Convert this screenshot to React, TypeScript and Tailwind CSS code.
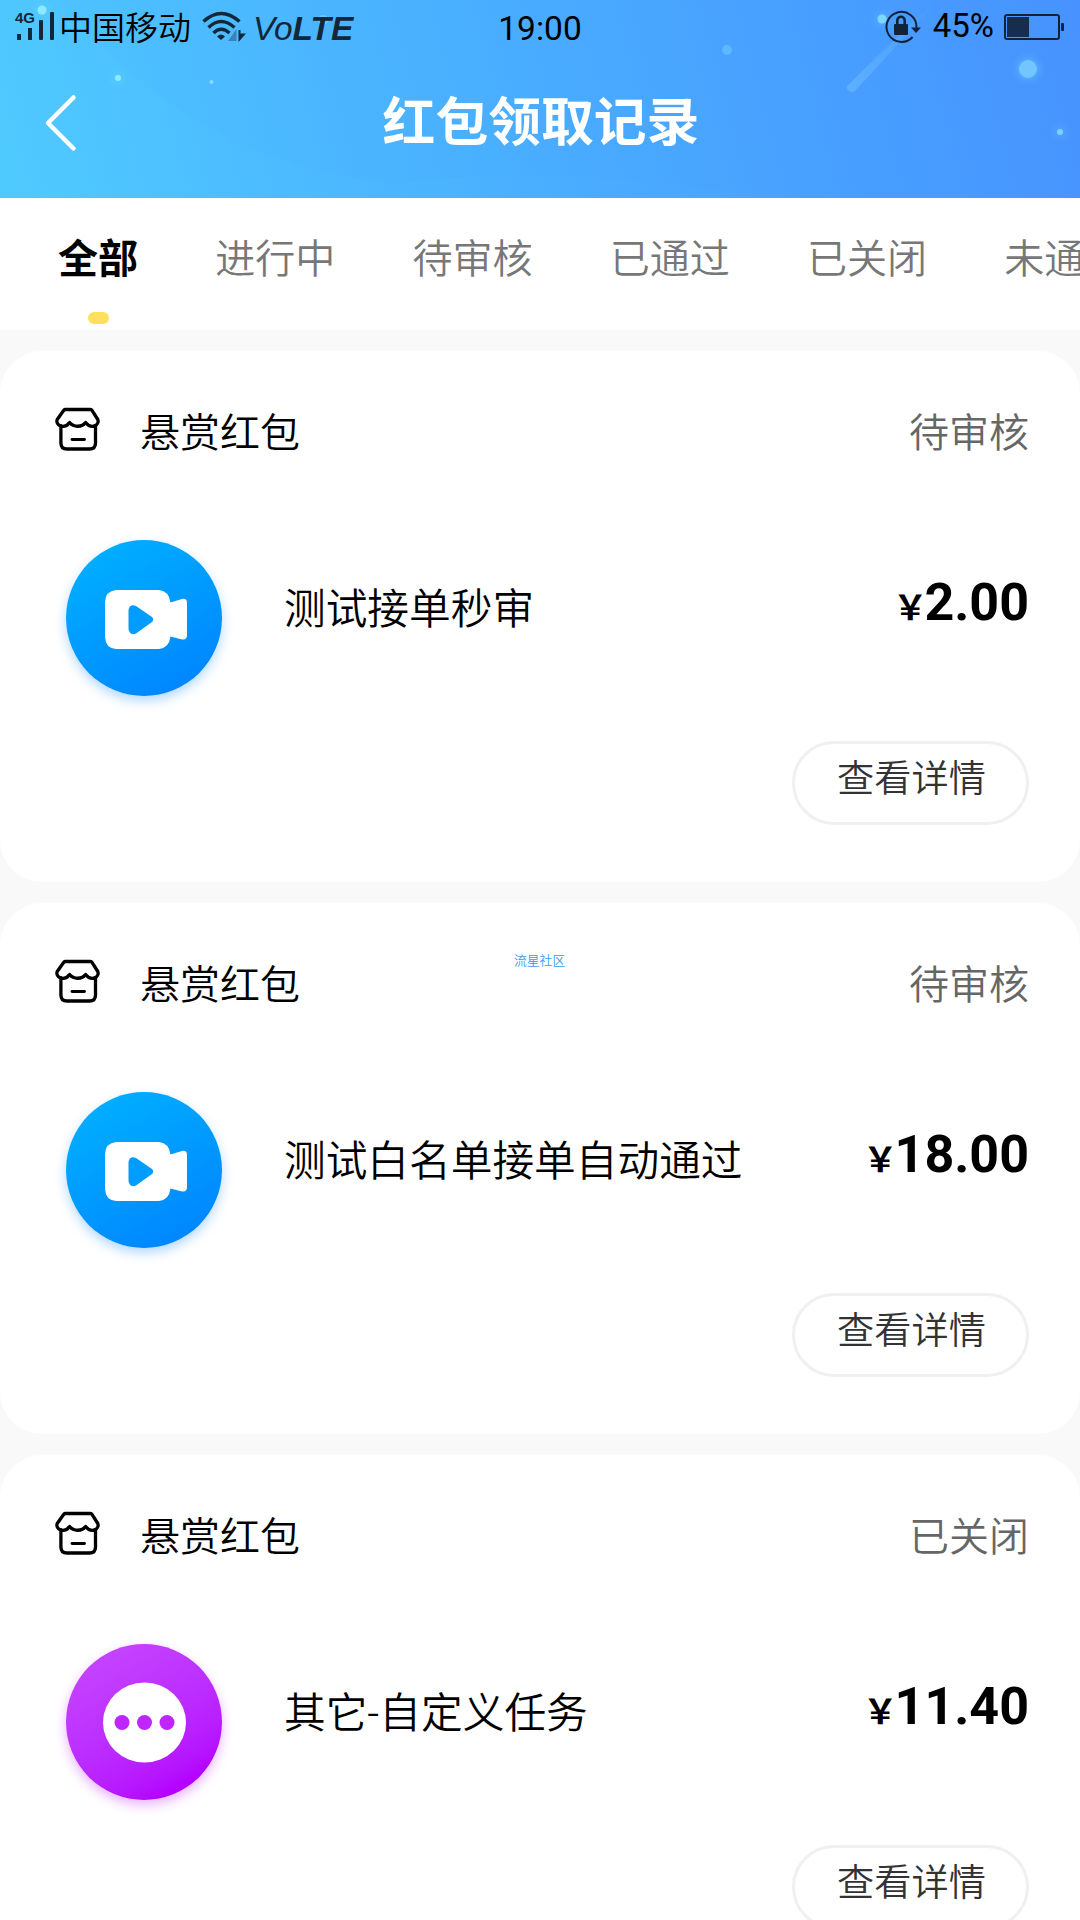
import { useState } from "react";

type TaskKind = "video" | "other";

const tabs = ["全部", "进行中", "待审核", "已通过", "已关闭", "未通过"];

const records: { id: number; kind: TaskKind; title: string; status: string; amount: string }[] = [
  { id: 1, kind: "video", title: "测试接单秒审", status: "待审核", amount: "2.00" },
  { id: 2, kind: "video", title: "测试白名单接单自动通过", status: "待审核", amount: "18.00" },
  { id: 3, kind: "other", title: "其它-自定义任务", status: "已关闭", amount: "11.40" },
];

function HeaderBackdrop() {
  return (
    <svg className="absolute inset-0 h-full w-full" viewBox="0 0 1080 198" fill="none">
      <defs>
        <linearGradient id="trail" x1="851" y1="88" x2="935" y2="2" gradientUnits="userSpaceOnUse">
          <stop stopColor="#7cc8ff" stopOpacity="0.4" />
          <stop offset="1" stopColor="#7cc8ff" stopOpacity="0" />
        </linearGradient>
        <filter id="glow" x="-100%" y="-100%" width="300%" height="300%">
          <feGaussianBlur stdDeviation="4" />
        </filter>
      </defs>
      <path d="M60 0C130 80 220 165 400 184C560 160 700 190 800 198H1080V0Z" fill="#3f9dff" fillOpacity="0.05" />
      <path d="M847 86L934 1L936 3L855 91A5 5 0 0 1 847 86Z" fill="url(#trail)" />
      <g fill="#7fe0ff" fillOpacity="0.45" filter="url(#glow)">
        <circle cx="42" cy="10" r="5" />
        <circle cx="118" cy="78" r="4" />
        <circle cx="882" cy="19" r="5" />
        <circle cx="1028" cy="69" r="10" />
        <circle cx="1060" cy="132" r="4" />
      </g>
      <circle cx="42" cy="10" r="4.5" fill="#8feaff" />
      <circle cx="118" cy="78" r="3" fill="#8feaff" />
      <circle cx="211.500" cy="82" r="2" fill="#82dfff" />
      <circle cx="323" cy="20" r="5" fill="#7fd6ff" fillOpacity="0.6" />
      <circle cx="727" cy="50" r="5" fill="#5cb8ff" />
      <circle cx="882" cy="19" r="4.500" fill="#7cd8ff" />
      <circle cx="1028" cy="69" r="9" fill="#72c5ff" />
      <circle cx="1060" cy="132" r="3" fill="#7ad3ff" />
    </svg>
  );
}

function SignalIcon() {
  return (
    <svg className="h-[31px] w-[40px]" viewBox="0 0 40 31" fill="#12283a">
      <rect x="2" y="23" width="4" height="6" />
      <rect x="13" y="17" width="4" height="12" />
      <rect x="24" y="9" width="4" height="20" rx="1" />
      <rect x="35" y="1" width="4" height="28" rx="1" />
    </svg>
  );
}

function WifiIcon() {
  return (
    <svg className="h-[32px] w-[44px]" viewBox="0 0 44 32" fill="none" stroke="#12283a" strokeWidth="3.400">
      <path d="M1.500 10.500Q19 -5.500 37.500 10.500" />
      <path d="M6.500 16.500Q19 4.500 32.500 16.500" />
      <path d="M11.500 22Q19 14.500 27.500 22" />
      <path d="M15 25.500Q19 21.500 23 25.500L19 29Z" fill="#12283a" stroke="none" />
      <path d="M34.500 18V30H26Z" fill="#3a83b8" stroke="none" />
      <path d="M36.500 19V31L44 22.500H38.500V19Z" fill="#12283a" stroke="none" />
    </svg>
  );
}

function RotationLockIcon() {
  return (
    <svg className="h-[34px] w-[38px]" viewBox="0 0 38 34" fill="none" stroke="#12223a">
      <path d="M27.600 27A15 15 0 1 1 31.500 17V18" strokeWidth="2" />
      <path d="M26 17.500H36L31 23Z" fill="#12223a" stroke="none" />
      <rect x="9" y="14" width="14" height="11" rx="1" fill="#12223a" stroke="none" />
      <path d="M12.300 15V10.500a3.700 3.700 0 0 1 7.400 0V15" strokeWidth="2.600" />
    </svg>
  );
}

function BatteryIcon() {
  return (
    <svg className="h-[28px] w-[62px]" viewBox="0 0 62 28" fill="none">
      <rect x="1" y="2" width="54" height="24" rx="2" stroke="#12223a" strokeWidth="2" />
      <rect x="3" y="4" width="22" height="20" fill="#172d4e" />
      <rect x="57" y="10" width="3" height="8" rx="1" fill="#12223a" />
    </svg>
  );
}

function StatusBar() {
  return (
    <div className="relative grid h-[54px] grid-cols-3 items-center text-black">
      <div className="flex items-center pl-[15px]">
        <div className="relative -mt-[1px]">
          <SignalIcon />
          <span className="absolute top-[-1px] left-0 font-['Liberation_Sans'] text-[15px] leading-[15px] font-bold text-[#12283a]">
            4G
          </span>
        </div>
        <span className="-mt-[3px] ml-[4px] text-[33px] leading-[50px] whitespace-nowrap">中国移动</span>
        <div className="-mt-[1px] ml-[11px]">
          <WifiIcon />
        </div>
        <span className="mt-[4px] ml-[7px] font-['Liberation_Sans'] text-[33.400px] leading-[50px] font-normal text-[#12283a] italic">
          Vo<b>LTE</b>
        </span>
      </div>
      <span className="mt-[3px] text-center font-[Roboto] text-[33.500px] leading-[50px] font-normal">19:00</span>
      <div className="-mt-[1px] flex items-center justify-end pr-[14px]">
        <RotationLockIcon />
        <span className="-mt-[1px] ml-[10px] font-[Roboto] text-[33px] leading-[50px] font-normal">45%</span>
        <div className="ml-[10px]">
          <BatteryIcon />
        </div>
      </div>
    </div>
  );
}

function StoreIcon() {
  return (
    <svg
      className="h-[44px] w-[46px]"
      viewBox="0 0 46 44"
      fill="none"
      stroke="#000"
      strokeWidth="3.300"
      strokeLinecap="round"
      strokeLinejoin="round"
    >
      <path d="M10.500 2.500H35.500Q36.500 2.500 37 3.300L42.800 12.500C44.800 18 36.500 23 30.600 15.500C27 20.500 18.500 20.500 14.600 15.500C9 23 0.200 18 2.200 12.500L8.800 3.300Q9.400 2.500 10.500 2.500Z" />
      <path d="M5.900 19V36Q5.900 42 11.900 42H34.500Q40.500 42 40.500 36V19" />
      <path d="M17 32.500H29.500" strokeWidth="2.800" />
    </svg>
  );
}

function TaskAvatar({ kind }: { kind: TaskKind }) {
  if (kind === "video") {
    return (
      <div className="h-[156px] w-[156px] rounded-full bg-linear-150 from-[#00b4ff] to-[#007fff] shadow-[0_5px_12px_rgba(0,128,255,0.3)]">
        <svg viewBox="0 0 156 156">
          <path
            d="M50 50H93Q103 51 104.500 62.500L116 59Q121 58 121 63V95Q121 100 116 99.500L104.500 96.500Q103 108 93 109H50Q39.500 108 39 97V62Q39.500 51 50 50Z"
            fill="#fff"
          />
          <path d="M62.500 70Q63.500 63.500 70 66L86 77Q88.500 79.500 86 82L70 93.500Q63.500 96 62.500 89Z" fill="#009cff" />
        </svg>
      </div>
    );
  }

  return (
    <div className="h-[156px] w-[156px] rounded-full bg-linear-150 from-[#c544ff] from-10% to-[#b400ff] to-85% shadow-[0_5px_12px_rgba(180,0,255,0.3)]">
      <svg viewBox="0 0 156 156">
        <ellipse cx="78.500" cy="78.500" rx="41.500" ry="40" fill="#fff" />
        <g fill="#bf26ff">
          <circle cx="56" cy="78.500" r="7.500" />
          <circle cx="78.500" cy="78.500" r="7.500" />
          <circle cx="101" cy="78.500" r="7.500" />
        </g>
      </svg>
    </div>
  );
}

function RecordCard({ record }: { record: (typeof records)[number] }) {
  return (
    <article className="h-[531px] shrink-0 rounded-[42px] bg-white pt-[49px] pr-[51px] pl-[55px]">
      <div className="flex h-[60px] items-center text-[40px] leading-[60px]">
        <div className="-mt-[3px]">
          <StoreIcon />
        </div>
        <span className="ml-[39px] text-black">悬赏红包</span>
        <span className="ml-auto text-[#666]">{record.status}</span>
      </div>

      <div className="mt-[80px] flex h-[156px] items-start pl-[11px]">
        <TaskAvatar kind={record.kind} />
        <h2 className="mt-[40px] ml-[62px] font-[Roboto,'Noto_Sans_CJK_SC',sans-serif] text-[41.700px] leading-[60px] font-[350]">
          {record.title}
        </h2>
        <div className="mt-[33px] ml-auto flex items-baseline leading-[60px]">
          <span className="-mr-[3px] text-[34.500px] font-bold">￥</span>
          <span className="font-[Roboto] text-[52px] font-bold">{record.amount}</span>
        </div>
      </div>

      <div className="mt-[45px] flex justify-end">
        <button
          type="button"
          className="h-[84px] w-[237px] rounded-full border-3 border-[#f0f0f0] pb-[14px] pl-[2px] text-[37.200px] leading-[60px] text-[#333]"
        >
          查看详情
        </button>
      </div>
    </article>
  );
}

export default function App() {
  const [activeTab, setActiveTab] = useState(0);

  return (
    <div className="relative flex h-[1920px] w-[1080px] flex-col overflow-hidden bg-[#f9f9f9] font-['Noto_Sans_CJK_SC',sans-serif] font-[350] text-black">
      <header className="relative h-[198px] shrink-0 bg-linear-75 from-[#4fcaff] via-[#4aadff] to-[#4892ff]">
        <HeaderBackdrop />
        <StatusBar />
        <div className="relative grid h-[132px] grid-cols-[200px_1fr_200px] items-center">
          <button type="button" aria-label="返回" className="mt-[6px] pl-[43px]">
            <svg className="h-[58px] w-[36px]" viewBox="0 0 36 58" fill="none" stroke="#fff" strokeWidth="4.500">
              <path d="M30.500 3.500L5 29L30.500 54.500" strokeLinecap="round" strokeLinejoin="round" />
            </svg>
          </button>
          <h1 className="-mt-[4px] pl-[2px] text-center text-[52.800px] leading-[80px] font-bold text-white">红包领取记录</h1>
        </div>
      </header>

      <nav className="flex h-[132px] shrink-0 overflow-hidden bg-white pl-[19.500px]">
        {tabs.map((label, index) => (
          <button
            key={label}
            type="button"
            onClick={() => setActiveTab(index)}
            className="flex shrink-0 flex-col items-center px-[38.500px] pt-[28px] text-[40.100px] leading-[60px] whitespace-nowrap"
          >
            <span className={index === activeTab ? "font-bold text-black" : "text-[#777]"}>{label}</span>
            {index === activeTab && <span className="mt-[26px] h-[12px] w-[21px] rounded-full bg-[#ffdf5e]" />}
          </button>
        ))}
      </nav>

      <main className="flex flex-col gap-[21px] pt-[21px]">
        {records.map((record) => (
          <RecordCard key={record.id} record={record} />
        ))}
      </main>

      <span className="absolute top-[950px] left-[514px] text-[12.800px] leading-[20px] text-[#3d9cf5]">流星社区</span>
    </div>
  );
}
